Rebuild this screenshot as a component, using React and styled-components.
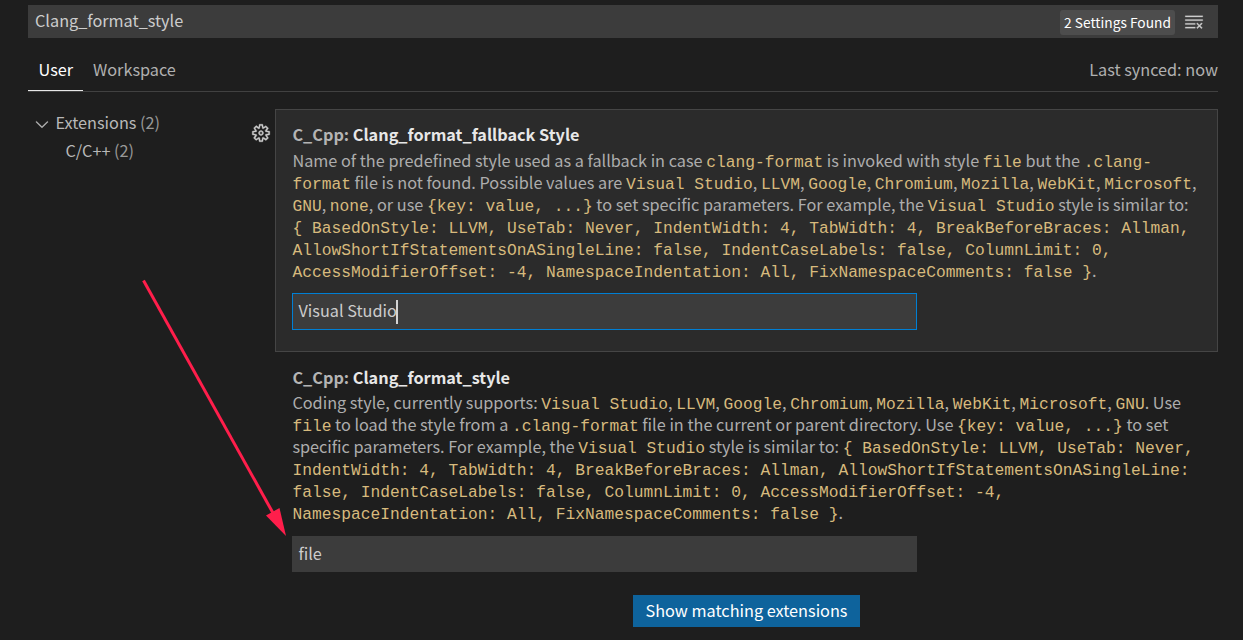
import React from "react";
import styled, { createGlobalStyle } from "styled-components";
import { VscGear, VscClearAll, VscChevronDown } from "react-icons/vsc";

const GlobalStyle = createGlobalStyle`
  * { box-sizing: border-box; }
  body {
    margin: 0;
    background: #1e1e1e;
    color: #cccccc;
    font-family: "Noto Sans CJK SC", sans-serif;
    font-size: 16.25px;
  }
`;

const Editor = styled.main`
  position: relative;
  width: 1243px;
  height: 640px;
  padding: 5px 25px 0 28px;
  overflow: hidden;
  background: #1e1e1e;
`;

const SearchBar = styled.div`
  display: flex;
  align-items: center;
  height: 33px;
  padding: 0 14px 0 7px;
  background: #3c3c3c;

  svg {
    stroke: currentColor;
    stroke-width: 0.2px;
  }
`;

const Query = styled.span`
  flex: 1;
  height: 33px;
  line-height: 31px;
  color: #cccccc;
`;

const CountBadge = styled.span`
  width: 115px;
  height: 25px;
  margin: 1px 9px 0 0;
  border-radius: 3px;
  background: #4d4d4d;
  color: #ffffff;
  font-size: 13.75px;
  line-height: 25px;
  text-align: center;
  white-space: nowrap;
`;

const TabBar = styled.nav`
  display: flex;
  height: 54px;
  padding-top: 12px;
  border-bottom: 1px solid #414141;
`;

const Tab = styled.span`
  width: ${(p) => p.$width};
  height: 41px;
  padding-left: ${(p) => p.$pad};
  line-height: 38px;
  color: ${(p) => (p.$active ? "#ffffff" : "#b0b0b0")};
  border-bottom: 1px solid ${(p) => (p.$active ? "#e7e7e7" : "transparent")};
`;

const SyncStatus = styled.span`
  margin-left: auto;
  line-height: 38px;
  color: #b0b0b0;
`;

const Body = styled.div`
  display: flex;
  padding-top: 16px;
`;

const Tree = styled.aside`
  width: 223px;
  color: #b8b8b8;
`;

const TreeRow = styled.div`
  display: flex;
  align-items: center;
  height: 28px;
  padding-left: ${(p) => p.$indent};
  white-space: pre;

  svg {
    margin: 3px 3.5px 0 0;
    stroke: currentColor;
    stroke-width: 0.2px;
  }
`;

const Count = styled.span`
  color: #989898;
`;

const GearSlot = styled.div`
  width: 24px;
  padding-top: 15px;
  color: #cccccc;

  svg {
    stroke: currentColor;
    stroke-width: 0.3px;
  }
`;

const Settings = styled.section`
  display: flex;
  flex-direction: column;
  width: 943px;
  padding-top: 1px;
`;

const Setting = styled.article`
  height: ${(p) => p.$height};
  padding: 12px 0 0 16px;
  border: 1px solid ${(p) => (p.$focused ? "#454545" : "transparent")};
  background: ${(p) => (p.$focused ? "#2b2b2b" : "transparent")};
`;

const Title = styled.h2`
  margin: 0;
  padding-left: 0.4px;
  height: ${(p) => p.$height};
  font-size: 16.25px;
  font-weight: 700;
  line-height: 24px;
  color: #e7e7e7;
`;

const Category = styled.span`
  color: #b4b4b4;
`;

const Description = styled.div`
  padding-left: 0.4px;
  color: #adadad;
`;

const Line = styled.div`
  height: 22px;
  line-height: 22px;
  white-space: pre;
`;

const Code = styled.code`
  color: #d7ba7d;
  font-family: "Liberation Mono", monospace;
  font-size: 16.25px;
`;

const Field = styled.div`
  display: flex;
  align-items: center;
  width: 625px;
  height: ${(p) => (p.$focused ? "37px" : "36px")};
  margin-top: ${(p) => (p.$focused ? "12px" : "13px")};
  border: ${(p) => (p.$focused ? "1px solid #007fd4" : "0")};
  padding-left: ${(p) => (p.$focused ? "5.5px" : "6.5px")};
  background: #3c3c3c;
  line-height: 24px;
`;

const FieldText = styled.span`
  height: ${(p) => (p.$focused ? "27px" : "26px")};
`;

const Caret = styled.span`
  width: 2px;
  height: 24px;
  margin-left: -0.5px;
  background: #d4d4d4;
`;

const ShowButton = styled.button`
  align-self: center;
  width: 227px;
  height: 32px;
  padding: 0 0 2px;
  border: 0;
  background: #0e639c;
  color: #ffffff;
  font: inherit;
  line-height: 30px;
`;

const Arrow = styled.svg`
  position: absolute;
  left: 0;
  top: 0;
  pointer-events: none;
`;

// Text between backticks is rendered as inline code.
const fallbackLines = [
  "Name of the predefined style used as a fallback in case `clang-format` is invoked with style `file` but the `.clang-`",
  "`format` file is not found. Possible values are `Visual Studio`, `LLVM`, `Google`, `Chromium`, `Mozilla`, `WebKit`, `Microsoft`,",
  "`GNU`, `none`, or use `{key: value, ...}` to set specific parameters. For example, the `Visual Studio` style is similar to:",
  "`{ BasedOnStyle: LLVM, UseTab: Never, IndentWidth: 4, TabWidth: 4, BreakBeforeBraces: Allman,`",
  "`AllowShortIfStatementsOnASingleLine: false, IndentCaseLabels: false, ColumnLimit: 0,`",
  "`AccessModifierOffset: -4, NamespaceIndentation: All, FixNamespaceComments: false }`.",
];

const styleLines = [
  "Coding style, currently supports: `Visual Studio`, `LLVM`, `Google`, `Chromium`, `Mozilla`, `WebKit`, `Microsoft`, `GNU`. Use",
  "`file` to load the style from a `.clang-format` file in the current or parent directory. Use `{key: value, ...}` to set",
  "specific parameters. For example, the `Visual Studio` style is similar to: `{ BasedOnStyle: LLVM, UseTab: Never,`",
  "`IndentWidth: 4, TabWidth: 4, BreakBeforeBraces: Allman, AllowShortIfStatementsOnASingleLine:`",
  "`false, IndentCaseLabels: false, ColumnLimit: 0, AccessModifierOffset: -4,`",
  "`NamespaceIndentation: All, FixNamespaceComments: false }`.",
];

function RichText({ lines }) {
  return (
    <Description>
      {lines.map((line) => (
        <Line key={line}>
          {line.split("`").map((part, i) => (i % 2 ? <Code key={i}>{part}</Code> : part))}
        </Line>
      ))}
    </Description>
  );
}

export default function App() {
  return (
    <>
      <GlobalStyle />
      <Editor>
        <SearchBar>
          <Query>Clang_format_style</Query>
          <CountBadge>2 Settings Found</CountBadge>
          <VscClearAll size={20} />
        </SearchBar>
        <TabBar>
          <Tab $active $width="55px" $pad="10.5px">User</Tab>
          <Tab $width="110px" $pad="10px">Workspace</Tab>
          <SyncStatus>Last synced: now</SyncStatus>
        </TabBar>
        <Body>
          <Tree>
            <TreeRow $indent="4px">
              <VscChevronDown size={20} />
              Extensions <Count>(2)</Count>
            </TreeRow>
            <TreeRow $indent="37.5px">
              C/C++ <Count>(2)</Count>
            </TreeRow>
          </Tree>
          <GearSlot>
            <VscGear size={20} />
          </GearSlot>
          <Settings>
            <Setting $focused $height="243px">
              <Title $height="27px"><Category>C_Cpp: </Category>Clang_format_fallback Style</Title>
              <RichText lines={fallbackLines} />
              <Field $focused><FieldText $focused>Visual Studio</FieldText><Caret /></Field>
            </Setting>
            <Setting $height="243px">
              <Title $height="26px"><Category>C_Cpp: </Category>Clang_format_style</Title>
              <RichText lines={styleLines} />
              <Field><FieldText>file</FieldText></Field>
            </Setting>
            <ShowButton>Show matching extensions</ShowButton>
          </Settings>
        </Body>
        <Arrow width="320" height="560" viewBox="0 0 320 560">
          <path d="M143.5 280.5 273 513" stroke="#ff1e4b" strokeWidth="3" fill="none" />
          <path d="M286 536 266 515.5 279.5 508Z" fill="#ff1e4b" />
        </Arrow>
      </Editor>
    </>
  );
}
